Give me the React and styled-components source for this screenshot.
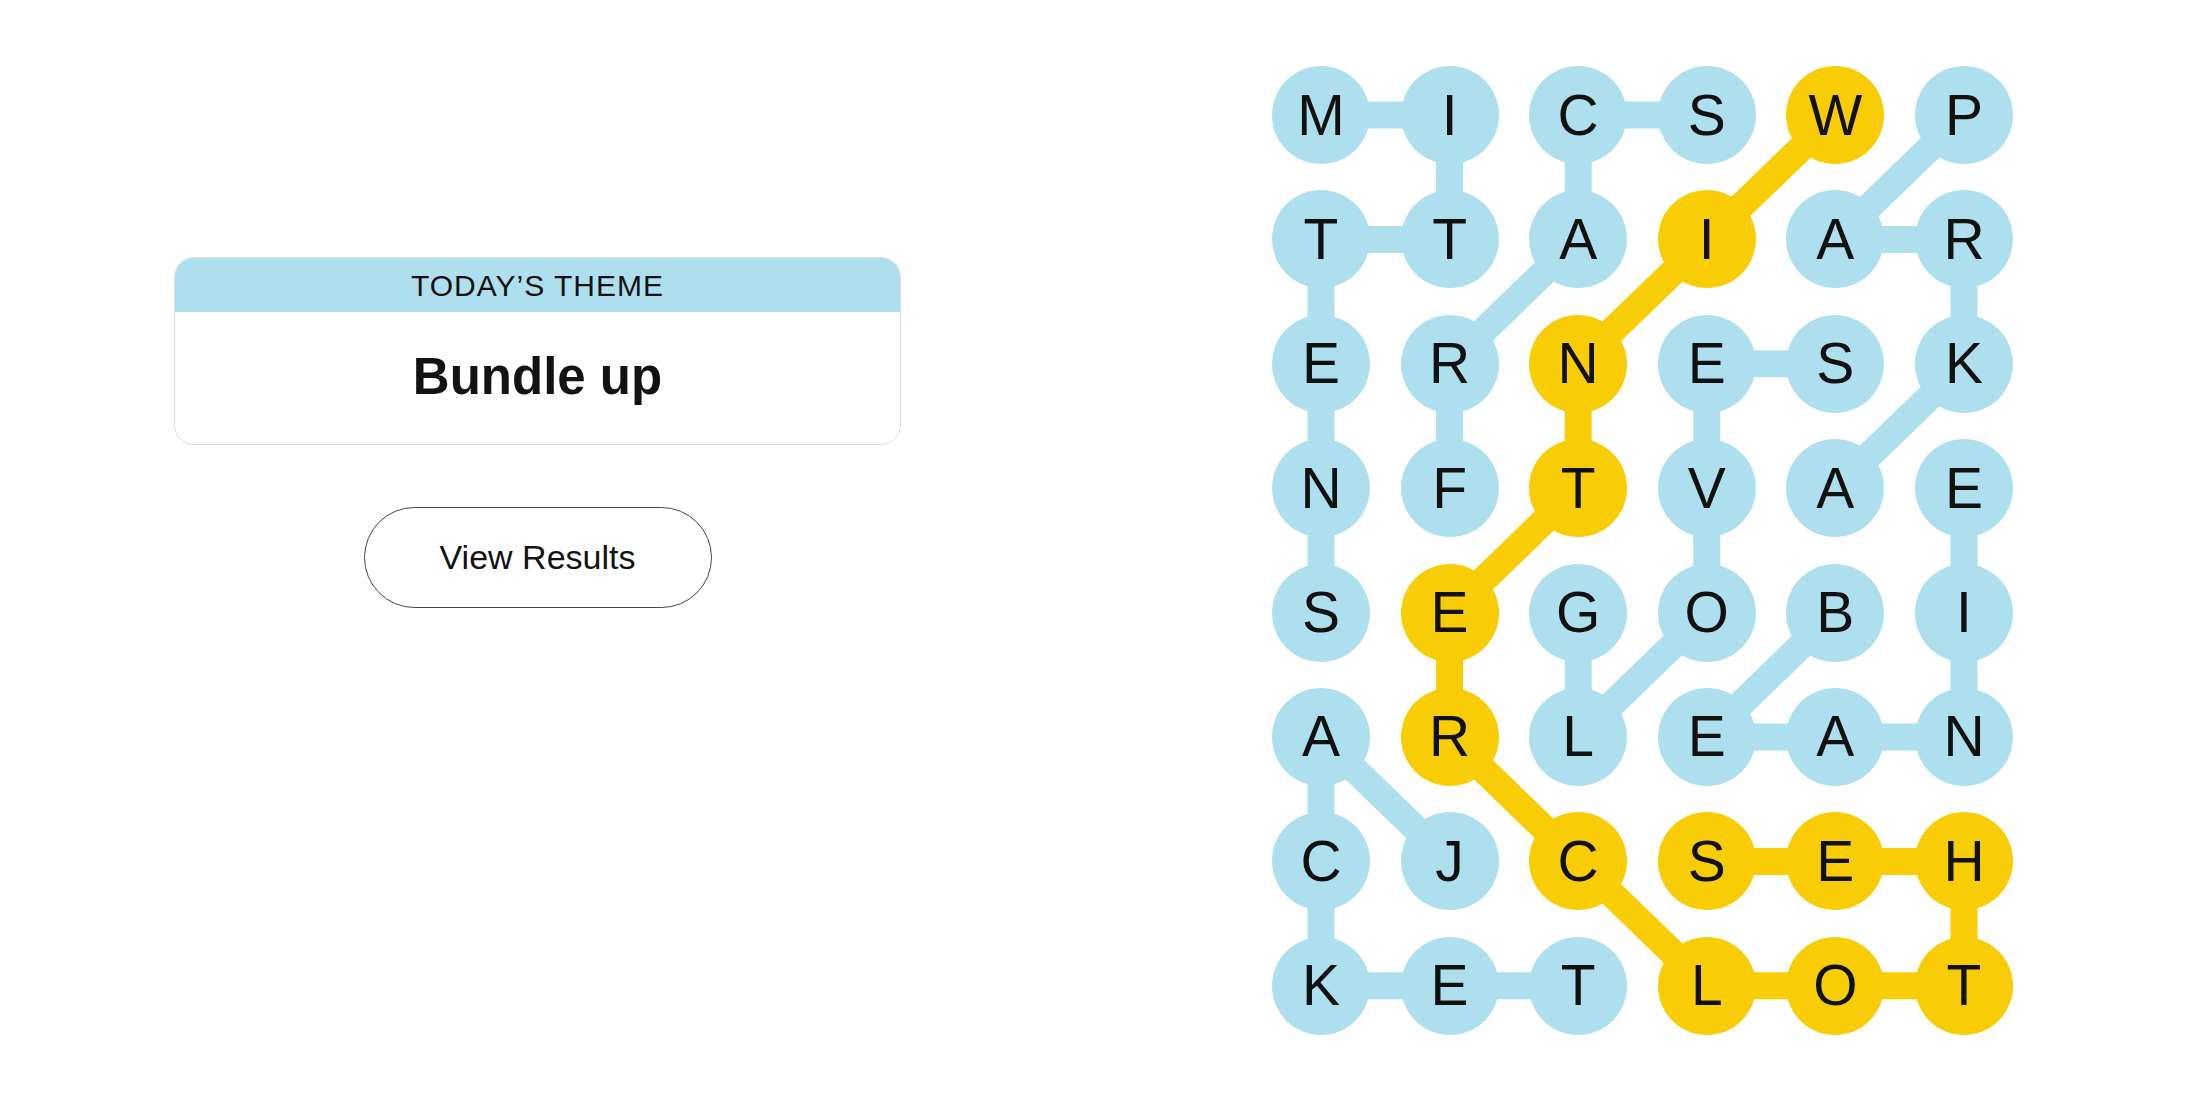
import React from 'react';
import styled, { createGlobalStyle } from 'styled-components';

const BLUE = '#aedfee';
const YELLOW = '#f8cd05';

// board geometry (px)
const CELL = 98;
const COL_STEP = 128.6;
const ROW_STEP = 124.4;

const LETTERS = [
  'MICSWP',
  'TTAIAR',
  'ERNESK',
  'NFTVAE',
  'SEGOBI',
  'ARLEAN',
  'CJCSEH',
  'KETLOT',
];

// words as paths of [row, col]
const WORDS = [
  { spangram: false, path: [[0, 0], [0, 1], [1, 1], [1, 0], [2, 0], [3, 0], [4, 0]] },
  { spangram: false, path: [[0, 3], [0, 2], [1, 2], [2, 1], [3, 1]] },
  { spangram: false, path: [[0, 5], [1, 4], [1, 5], [2, 5], [3, 4]] },
  { spangram: false, path: [[4, 2], [5, 2], [4, 3], [3, 3], [2, 3], [2, 4]] },
  { spangram: false, path: [[4, 4], [5, 3], [5, 4], [5, 5], [4, 5], [3, 5]] },
  { spangram: false, path: [[6, 1], [5, 0], [6, 0], [7, 0], [7, 1], [7, 2]] },
  {
    spangram: true,
    path: [[0, 4], [1, 3], [2, 2], [3, 2], [4, 1], [5, 1], [6, 2], [7, 3], [7, 4], [7, 5], [6, 5], [6, 4], [6, 3]],
  },
];

const spangramCells = new Set(
  WORDS.filter((w) => w.spangram).flatMap((w) => w.path.map(([r, c]) => `${r}-${c}`))
);

const GlobalStyle = createGlobalStyle`
  html, body {
    margin: 0;
    padding: 0;
    background: #ffffff;
    font-family: "Liberation Sans", Arial, sans-serif;
    color: #121212;
  }
`;

const Page = styled.main`
  width: 2200px;
  height: 1100px;
  display: flex;
  align-items: flex-start;
  box-sizing: border-box;
  padding-left: 174px;
  gap: 371px;
`;

const SidePanel = styled.section`
  width: 727px;
  margin-top: 257px;
  display: flex;
  flex-direction: column;
  align-items: center;
  gap: 62px;
`;

const ThemeCard = styled.div`
  width: 100%;
  height: 188px;
  box-sizing: border-box;
  border: 1px solid #dcdcdc;
  border-radius: 20px;
  overflow: hidden;
  display: flex;
  flex-direction: column;
`;

const ThemeHeader = styled.div`
  height: 54px;
  background: ${BLUE};
  display: flex;
  align-items: center;
  justify-content: center;
  font-size: 30px;
  letter-spacing: 1px;
  color: #121212;
  padding-top: 2px;
  box-sizing: border-box;
`;

const ThemeBody = styled.div`
  flex: 1;
  display: flex;
  align-items: center;
  justify-content: center;
  font-size: 51px;
  font-weight: 700;
  color: #121212;
  padding-bottom: 4px;
`;

const ResultsButton = styled.button`
  width: 348px;
  height: 101px;
  border: 1.5px solid #444444;
  border-radius: 51px;
  background: #ffffff;
  font-family: "Liberation Sans", Arial, sans-serif;
  font-size: 34px;
  color: #121212;
  cursor: pointer;
`;

const Board = styled.div`
  position: relative;
  margin-top: 66px;
  width: ${5 * COL_STEP + CELL}px;
  height: ${7 * ROW_STEP + CELL}px;
`;

const Links = styled.svg`
  position: absolute;
  inset: 0;
  width: 100%;
  height: 100%;
`;

const Grid = styled.div`
  position: relative;
  display: grid;
  grid-template-columns: repeat(6, ${CELL}px);
  grid-auto-rows: ${CELL}px;
  column-gap: ${COL_STEP - CELL}px;
  row-gap: ${ROW_STEP - CELL}px;
`;

const Cell = styled.div`
  width: ${CELL}px;
  height: ${CELL}px;
  border-radius: 50%;
  background: ${(p) => (p.$spangram ? YELLOW : BLUE)};
  display: flex;
  align-items: center;
  justify-content: center;
  font-size: 57px;
  color: #111111;
  line-height: 1;
`;

const center = ([r, c]) => [c * COL_STEP + CELL / 2, r * ROW_STEP + CELL / 2];

const WordLinks = () => (
  <Links viewBox={`0 0 ${5 * COL_STEP + CELL} ${7 * ROW_STEP + CELL}`}>
    {WORDS.map((word, wi) =>
      word.path.slice(1).map((cell, i) => {
        const [x1, y1] = center(word.path[i]);
        const [x2, y2] = center(cell);
        return (
          <line
            key={`${wi}-${i}`}
            x1={x1}
            y1={y1}
            x2={x2}
            y2={y2}
            stroke={word.spangram ? YELLOW : BLUE}
            strokeWidth={27}
          />
        );
      })
    )}
  </Links>
);

const App = () => (
  <>
    <GlobalStyle />
    <Page>
      <SidePanel>
        <ThemeCard>
          <ThemeHeader>TODAY’S THEME</ThemeHeader>
          <ThemeBody>Bundle up</ThemeBody>
        </ThemeCard>
        <ResultsButton>View Results</ResultsButton>
      </SidePanel>
      <Board>
        <WordLinks />
        <Grid>
          {LETTERS.map((row, r) =>
            row.split('').map((letter, c) => (
              <Cell key={`${r}-${c}`} $spangram={spangramCells.has(`${r}-${c}`)}>
                {letter}
              </Cell>
            ))
          )}
        </Grid>
      </Board>
    </Page>
  </>
);

export default App;
